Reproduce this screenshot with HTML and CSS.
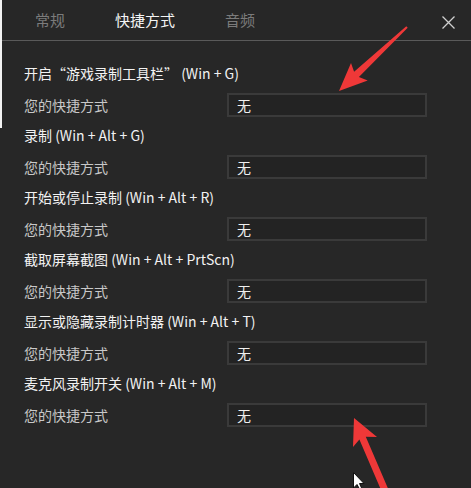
FILE: index.html
```html
<!DOCTYPE html>
<html lang="zh-CN">
<head>
    <meta charset="UTF-8">
    <title>快捷方式</title>
    <link rel="stylesheet" href="styles.css">
</head>
<body>
    <div class="edge"></div>
    <div class="panel">
        <div class="tabs">
            <span class="tab">常规</span>
            <span class="tab active">快捷方式</span>
            <span class="tab">音频</span>
            <svg class="close" width="13" height="13" viewBox="0 0 13 13">
                <path d="M0.5 0.5 L12.5 12.5 M12.5 0.5 L0.5 12.5" stroke="#d0d0d0" stroke-width="1.3" fill="none"/>
            </svg>
        </div>

        <div class="list">
            <div class="item">
                <p class="title">开启“游戏录制工具栏” (Win + G)</p>
                <div class="row">
                    <span class="label">您的快捷方式</span>
                    <span class="box">无</span>
                </div>
            </div>
            <div class="item">
                <p class="title">录制 (Win + Alt + G)</p>
                <div class="row">
                    <span class="label">您的快捷方式</span>
                    <span class="box">无</span>
                </div>
            </div>
            <div class="item">
                <p class="title">开始或停止录制 (Win + Alt + R)</p>
                <div class="row">
                    <span class="label">您的快捷方式</span>
                    <span class="box">无</span>
                </div>
            </div>
            <div class="item">
                <p class="title">截取屏幕截图 (Win + Alt + PrtScn)</p>
                <div class="row">
                    <span class="label">您的快捷方式</span>
                    <span class="box">无</span>
                </div>
            </div>
            <div class="item">
                <p class="title">显示或隐藏录制计时器 (Win + Alt + T)</p>
                <div class="row">
                    <span class="label">您的快捷方式</span>
                    <span class="box">无</span>
                </div>
            </div>
            <div class="item">
                <p class="title">麦克风录制开关 (Win + Alt + M)</p>
                <div class="row">
                    <span class="label">您的快捷方式</span>
                    <span class="box">无</span>
                </div>
            </div>
        </div>
    </div>

    <!-- red annotation arrows + mouse pointer on top of the screenshot -->
    <svg class="marks" width="471" height="488" viewBox="0 0 471 488">
        <polygon fill="#ef3838" points="339,91 351,63 354.1,71.8 406.3,26.3 407.7,27.7 358.9,77 367.7,80.5"/>
        <polygon fill="#ef3838" points="354,418 377,437 365.8,436.8 390.2,493.6 383.8,496.4 359.4,439.6 353,447"/>
        <polygon fill="#ffffff" stroke="#111" stroke-width="1" points="353.5,472.5 353.5,488 357,484.5 360,490 362,489 359.5,483.5 364,483.5"/>
    </svg>
</body>
</html>
```

FILE: styles.css
```css
*{
    margin: 0;
    padding: 0;
    box-sizing: border-box;
}
html,
body{
    width: 471px;
    height: 488px;
    overflow: hidden;
}
body{
    display: flex;
    background-color: #272727;
    font-family: "Noto Sans CJK SC", "Noto Sans", sans-serif;
    position: relative;
}
.edge{
    width: 2px;
    height: 128px;
    background-color: #f2f2f2;
    flex-shrink: 0;
}
.panel{
    flex: 1;
}
.tabs{
    display: flex;
    align-items: center;
    gap: 50px;
    height: 41px;
    padding-left: 33px;
    border-bottom: 1px solid #5a5a5a;
    font-size: 15px;
}
.tab{
    color: #7b7b7b;
    line-height: 40px;
}
.tab.active{
    color: #f4f4f4;
}
.close{
    margin-left: auto;
    margin-right: 16px;
    margin-top: 4px;
}
.list{
    padding: 17px 0 0 22px;
}
.title{
    color: #f2f2f2;
    font-size: 14px;
    line-height: 31px;
    white-space: nowrap;
}
.row{
    display: flex;
    align-items: center;
    height: 31px;
}
.label{
    width: 203px;
    color: #c8c8c8;
    font-size: 14px;
}
.box{
    width: 200px;
    height: 24px;
    border: 2px solid #3a3a3a;
    background-color: #232323;
    color: #f0f0f0;
    font-size: 14px;
    line-height: 20px;
    padding-left: 8px;
}
.marks{
    position: absolute;
    left: 0;
    top: 0;
    pointer-events: none;
}
```
